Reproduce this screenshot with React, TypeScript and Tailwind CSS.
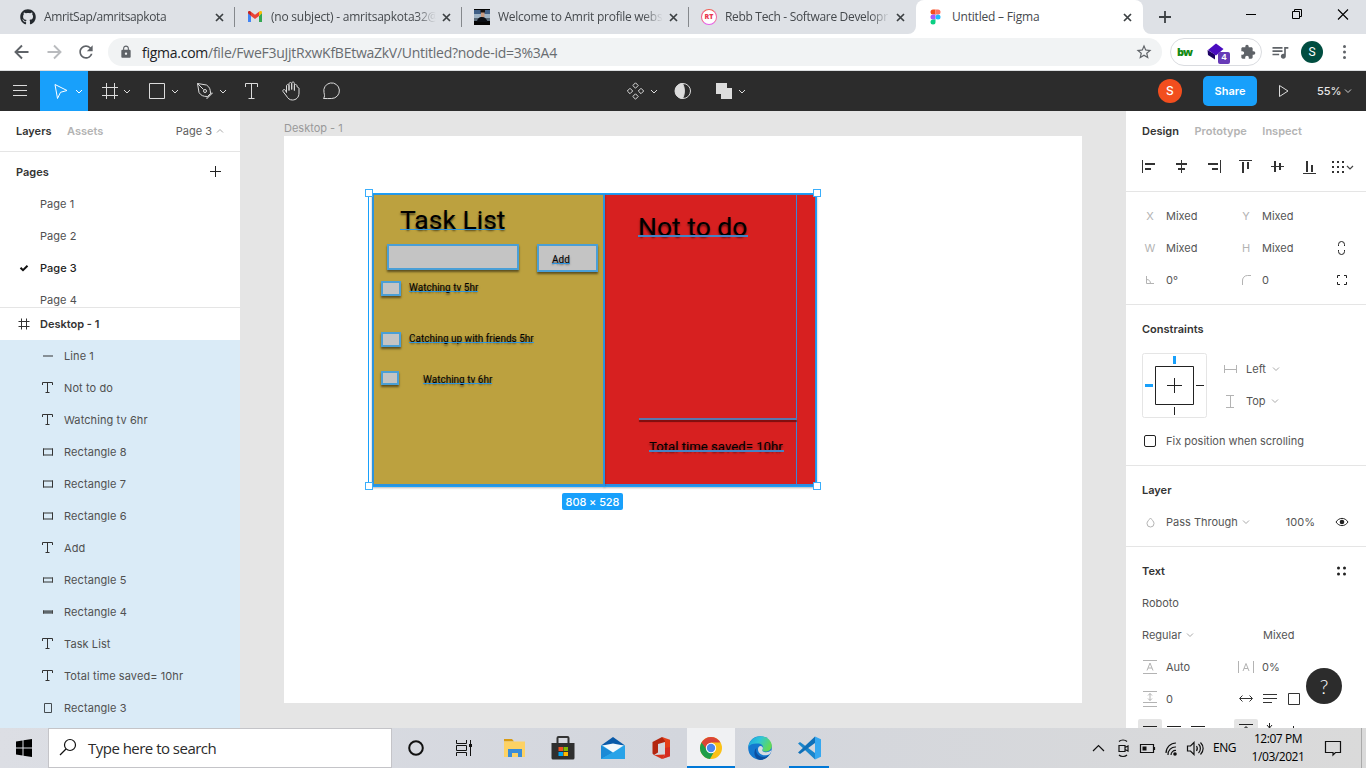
import type { ReactNode } from "react";
import { FaGithub } from "react-icons/fa";
import { MdExtension, MdLock, MdOutlineStarBorder, MdQueueMusic, MdRefresh } from "react-icons/md";

/* ---------- helpers ---------- */

function Icon({ w, h, className = "", children }: { w: number; h: number; className?: string; children: ReactNode }) {
  return (
    <svg width={w} height={h} viewBox={`0 0 ${w} ${h}`} fill="none" className={`shrink-0 ${className}`}>
      {children}
    </svg>
  );
}

function Chevron({ className = "" }: { className?: string }) {
  return (
    <Icon w={8} h={6} className={className}>
      <path d="M1 1.5 4 4.5 7 1.5" stroke="currentColor" />
    </Icon>
  );
}

/* ---------- browser chrome ---------- */

function GmailIcon() {
  return (
    <Icon w={16} h={16}>
      <path d="M1 3.5V13h3V7z" fill="#4285f4" />
      <path d="M15 3.5V13h-3V7z" fill="#34a853" />
      <path d="M1 4.2V3.4C1 2 2.500 1.600 3.600 2.400L4 2.700V7z" fill="#c5221f" />
      <path d="M15 4.2V3.4C15 2 13.500 1.600 12.400 2.400L12 2.700V7z" fill="#fbbc04" />
      <path d="M4 2.700 8 5.700 12 2.700V7L8 10 4 7z" fill="#ea4335" />
    </Icon>
  );
}

function PhotoIcon() {
  return (
    <Icon w={16} h={16}>
      <path fill="#050505" d="M0 0h16v16H0z" />
      <path fill="#3f5f86" d="M0 1h16v5H0z" />
      <path fill="#9fb4c6" d="M0 5h16v4H0z" />
      <path fill="#5a6a78" d="M0 9h16v3H0z" />
      <path fill="#0b0e14" d="M3 13c0-3 2-5 5-5s5 2 5.500 5z" />
      <path fill="#c79a80" d="M7 3h3.500v5H7z" />
      <path fill="#15110f" d="M6.500 1h4.500v2.500H6.500z" />
    </Icon>
  );
}

function RebbIcon() {
  return (
    <span className="flex size-4 items-center justify-center rounded-full border-[1.500px] border-t-[#f25c54] border-r-[#f06aa0] border-b-[#e85ce8] border-l-[#f25c8a] bg-white font-['Open_Sans',sans-serif] text-[7px] font-extrabold text-[#e8384f]">
      RT
    </span>
  );
}

function FigmaIcon() {
  return (
    <Icon w={16} h={16} className="ml-[2px]">
      <path d="M3 .5h2.500v5H3a2.500 2.500 0 0 1 0-5z" fill="#f24e1e" />
      <path d="M5.500.5H8a2.500 2.500 0 0 1 0 5H5.500z" fill="#ff7262" />
      <path d="M3 5.500h2.500v5H3a2.500 2.500 0 0 1 0-5z" fill="#a259ff" />
      <circle cx="8" cy="8" r="2.500" fill="#1abcfe" />
      <path d="M3 10.500h2.500V13A2.500 2.500 0 1 1 3 10.500z" fill="#0acf83" />
    </Icon>
  );
}

function TabClose() {
  return (
    <Icon w={9} h={9}>
      <path d="M1 1l7 7M8 1L1 8" stroke="#3c4043" strokeWidth="1.700" />
    </Icon>
  );
}

const TABS: { title: string; icon: ReactNode; track: string }[] = [
  { title: "AmritSap/amritsapkota", icon: <FaGithub className="size-4 text-[#24292e]" />, track: "tracking-[-0.37px]" },
  { title: "(no subject) - amritsapkota32@", icon: <GmailIcon />, track: "tracking-[-0.22px]" },
  { title: "Welcome to Amrit profile webs", icon: <PhotoIcon />, track: "tracking-[-0.26px]" },
  { title: "Rebb Tech - Software Developr", icon: <RebbIcon />, track: "tracking-[-0.32px]" },
];

function TabStrip() {
  return (
    <div className="flex h-[34px] shrink-0 bg-[#dee1e6] pl-2 font-['Open_Sans',sans-serif] text-[12px] text-[#45494d]">
      {TABS.map((t, i) => (
        <div key={t.title} className="flex w-[227px] shrink-0 items-center pl-3">
          <span className="flex w-6 shrink-0">{t.icon}</span>
          <span
            className={`w-[165px] whitespace-nowrap [mask-image:linear-gradient(to_right,black_88%,transparent_100%)] ${t.track}`}
          >
            {t.title}
          </span>
          <span className="ml-[6px]">
            <TabClose />
          </span>
          {i < 3 && <span className="ml-[10px] h-5 w-px bg-[#85888c]" />}
        </div>
      ))}
      <div className="relative flex w-[227px] shrink-0 items-center rounded-t-[8px] bg-white pl-3">
        <Icon w={8} h={8} className="absolute bottom-0 -left-2">
          <path d="M8 0v8H0a8 8 0 0 0 8-8z" fill="#fff" />
        </Icon>
        <Icon w={8} h={8} className="absolute -right-2 bottom-0">
          <path d="M0 0v8h8a8 8 0 0 1-8-8z" fill="#fff" />
        </Icon>
        <span className="flex w-6">
          <FigmaIcon />
        </span>
        <span className="w-[165px] tracking-[-0.2px]">Untitled – Figma</span>
        <span className="ml-[6px]">
          <TabClose />
        </span>
      </div>
      <Icon w={44} h={34}>
        <path d="M22 11v12M16 17h12" stroke="#3c4043" strokeWidth="1.800" />
      </Icon>
      <Icon w={179} h={34} className="ml-auto">
        <g stroke="#000">
          <path d="M59 14.500h10" />
          <path d="M105.500 11.500h7v7h-7zM107.500 11.500v-2h7v7h-2" />
          <path d="M151 9.500l10 10M161 9.500l-10 10" strokeWidth="1.100" />
        </g>
      </Icon>
    </div>
  );
}

function AddressBar() {
  return (
    <div className="flex h-9 shrink-0 items-center bg-white font-['Open_Sans',sans-serif]">
      <Icon w={72} h={36}>
        <path d="M28.500 18H16M22 11.500 15.500 18l6.500 6.500" stroke="#5f6368" strokeWidth="1.900" />
        <path d="M47.500 18H60M54 11.500l6.500 6.500-6.500 6.500" stroke="#b9bbbe" strokeWidth="1.900" />
      </Icon>
      <MdRefresh className="ml-[4px] size-5 text-[#5f6368]" />
      <div className="ml-3 flex h-7 w-[1054px] items-center rounded-full bg-[#f1f3f4] pr-[9px] pl-[11px]">
        <MdLock className="size-[14px] text-[#5f6368]" />
        <span className="ml-[9px] flex-1 text-[14px] tracking-[-0.26px] whitespace-nowrap text-[#686c70]">
          <span className="text-[#202124]">figma.com</span>/file/FweF3uJjtRxwKfBEtwaZkV/Untitled?node-id=3%3A4
        </span>
        <MdOutlineStarBorder className="size-[18px] text-[#5f6368]" />
      </div>
      <div className="ml-2 flex h-7 w-[92px] items-center rounded-full border border-[#dadce0] pl-[6px]">
        <span className="w-[21px] text-[11px] font-extrabold tracking-[-1px] text-[#138a13]">bw</span>
        <div className="relative">
          <Icon w={32} h={24}>
            <path d="M9.500 10 17 14.500v5L10 15z" fill="#1b0063" />
            <path d="M18 3.500l7.500 5.500-7.500 6.500-8-5.500z" fill="#4a0cc0" />
          </Icon>
          <span className="absolute top-[12px] left-[20px] flex h-3 w-3 items-center justify-center rounded-[2px] bg-[#673ab7] font-['Liberation_Sans',sans-serif] text-[9px] font-bold text-white">
            4
          </span>
        </div>
        <MdExtension className="ml-[10px] size-4 text-[#5f6368]" />
      </div>
      <MdQueueMusic className="ml-[8px] size-5 text-[#5f6368]" />
      <span className="ml-[11px] flex size-[22px] items-center justify-center rounded-full bg-[#004d40] font-[Roboto,sans-serif] text-[12px] text-white">
        S
      </span>
      <Icon w={43} h={36}>
        <g fill="#5f6368">
          <circle cx="21.500" cy="12.500" r="1.500" />
          <circle cx="21.500" cy="18" r="1.500" />
          <circle cx="21.500" cy="23.500" r="1.500" />
        </g>
      </Icon>
    </div>
  );
}

/* ---------- editor toolbar ---------- */

function Tool({ w = 48, active = false, children }: { w?: 40 | 48; active?: boolean; children: ReactNode }) {
  return (
    <div className={active ? "bg-[#18a0fb] text-white" : "text-[#dcdcdc]"}>
      <Icon w={w} h={40}>
        <g stroke="currentColor">
          {children}
          {w === 48 && <path d="M36 19l3 3 3-3" />}
        </g>
      </Icon>
    </div>
  );
}

function Toolbar() {
  return (
    <div className="flex h-10 shrink-0 items-center bg-[#2c2c2c] font-[Inter,sans-serif]">
      <Tool w={40}>
        <path d="M13 14.500h14M13 19.500h14M13 24.500h14" />
      </Tool>
      <Tool active>
        <path d="M15 13.500l12 6-6.500 1.800-3 6.200z" />
      </Tool>
      <Tool>
        <path d="M18.500 12v16M26.500 12v16M14 16.500h16M14 24.500h16" />
      </Tool>
      <Tool>
        <path d="M13.500 12.500h15v15h-15z" />
      </Tool>
      <Tool>
        <path d="M13.500 12.500l9 1.500c3 2 4 4 4 8.500l-3 3c-4.500 0-6.500-1-8.500-4zM13.500 12.500l6 6M23 26.500l5-5M22.500 28l6-6" />
        <circle cx="21" cy="20" r="1.500" />
      </Tool>
      <Tool w={40}>
        <path d="M13.500 16v-3.500h12V16M19.500 12.500v15M16.500 27.500h6" />
      </Tool>
      <Tool w={40}>
        <path d="M15.500 22v-6.500c0-2 2.500-2 2.500 0V20v-6.500c0-2 2.700-2 2.700 0V19v-6c0-2 2.700-2 2.700 0v7-4.500c0-2 2.600-2 2.600 0 0 2 1.500 1 2 2v5c0 4.500-3 7-6.500 7-3 0-4.500-1.500-6-4l-3.500-4.500c-.8-1.500 1.200-2.800 2.500-1.200z" transform="translate(-1 -.5)" />
      </Tool>
      <Tool w={40}>
        <path d="M11.500 27.500c1.500-2 1-3.500.5-6a7.800 7.800 0 1 1 7.700 6c-3 0-5 .2-8.200 0z" />
      </Tool>
      <div className="ml-[263px] flex">
        <Tool>
          <g transform="translate(20.500 20)">
            <path d="M0-8.200l2.700 2.700L0-2.800l-2.700-2.700zM0 2.800l2.700 2.700L0 8.200l-2.700-2.700zM-5.500-2.700l2.700 2.700-2.700 2.700L-8.200 0zM5.500-2.700L8.200 0 5.500 2.700 2.800 0z" />
          </g>
        </Tool>
        <Tool w={40}>
          <circle cx="20" cy="20" r="7.500" />
          <path d="M19.500 12.500a7.500 7.500 0 0 0 0 15c2.500-4 2.500-11 0-15z" fill="currentColor" />
        </Tool>
        <Tool>
          <path d="M13 12h11v5h5v11H18v-5h-5z" fill="currentColor" stroke="none" />
        </Tool>
      </div>
      <span className="ml-auto flex size-6 items-center justify-center rounded-full bg-[#f24e1e] text-[12px] font-medium text-white">
        S
      </span>
      <span className="ml-[21px] flex h-[30px] w-[54px] items-center justify-center rounded-[5px] bg-[#18a0fb] text-[11px] font-semibold tracking-[0.05px] text-white">
        Share
      </span>
      <Icon w={52} h={40}>
        <path d="M22.500 14.500v11l8.500-5.500z" stroke="#dcdcdc" />
      </Icon>
      <span className="ml-[8px] w-[27px] text-[11px] font-medium text-[#e6e6e6]">55%</span>
      <Chevron className="mr-[14px] text-[#cfcfcf]" />
    </div>
  );
}

/* ---------- left panel ---------- */

type LayerKind = "line" | "text" | "rect" | "flat" | "bar" | "tall";

function LayerIcon({ kind }: { kind: LayerKind }) {
  return (
    <Icon w={12} h={12} className="mr-[10px]">
      {kind === "line" && <path d="M1 6h10" stroke="#868f96" strokeWidth="2" />}
      {kind === "text" && <path d="M.5 3V.5h10V3M5.500.5v10M3.500 10.500h4" stroke="#333" />}
      {kind === "rect" && (
        <>
          <path d="M1 3h10M1 9h10" stroke="#869096" strokeWidth="2" />
          <path d="M1.500 2.500v7M10.500 2.500v7" stroke="#333" />
        </>
      )}
      {kind === "flat" && (
        <>
          <path d="M1 4h10M1 8h10" stroke="#869096" strokeWidth="2" />
          <path d="M1.500 3.500v5M10.500 3.500v5" stroke="#444" />
        </>
      )}
      {kind === "bar" && (
        <>
          <path d="M1 6h10" stroke="#869096" strokeWidth="4" />
          <path d="M1 6h10" stroke="#5e676c" strokeWidth="2" />
          <path d="M1.500 4.500v3M10.500 4.500v3" stroke="#444" />
        </>
      )}
      {kind === "tall" && <path d="M2.500 1.500h7v9h-7z" stroke="#444b50" />}
    </Icon>
  );
}

const LAYERS: [LayerKind, string][] = [
  ["line", "Line 1"],
  ["text", "Not to do"],
  ["text", "Watching tv 6hr"],
  ["rect", "Rectangle 8"],
  ["rect", "Rectangle 7"],
  ["rect", "Rectangle 6"],
  ["text", "Add"],
  ["flat", "Rectangle 5"],
  ["bar", "Rectangle 4"],
  ["text", "Task List"],
  ["text", "Total time saved= 10hr"],
  ["tall", "Rectangle 3"],
];

function LeftPanel() {
  return (
    <div className="flex w-60 shrink-0 flex-col overflow-hidden bg-white text-[#505050]">
      <div className="flex h-[41px] shrink-0 items-center border-b border-[#e5e5e5] px-4">
        <span className="w-[51px] font-semibold text-[#333]">Layers</span>
        <span className="font-semibold text-[#b3b3b3]">Assets</span>
        <span className="ml-auto text-[#606060]">Page 3</span>
        <Chevron className="ml-[4px] rotate-180 text-[#aaa]" />
      </div>
      <div className="flex h-9 shrink-0 items-center pt-1 pl-4">
        <span className="font-semibold text-[#333]">Pages</span>
        <Icon w={12} h={12} className="mr-[19px] ml-auto">
          <path d="M6.500 0v11M1 5.500h11" stroke="#222" />
        </Icon>
      </div>
      <div className="h-[120px] shrink-0 overflow-hidden border-b border-[#e5e5e5]">
        {[1, 2, 3, 4].map((n) => (
          <div key={n} className="flex h-8 items-center tracking-[0.05px]">
            <span className="flex w-10 pl-[19px]">
              {n === 3 && (
                <Icon w={10} h={8}>
                  <path d="M1.500 3.800 4 6.200 8.500 1.800" stroke="#111" strokeWidth="2" />
                </Icon>
              )}
            </span>
            <span className={n === 3 ? "font-medium text-[#222]" : ""}>Page {n}</span>
          </div>
        ))}
      </div>
      <div className="flex h-8 shrink-0 items-center pl-[18px] font-semibold text-[#333]">
        <Icon w={12} h={12} className="mr-[10px]">
          <path d="M3.500.5v11M8.500.5v11M.5 3.500h11M.5 8.500h11" stroke="#333" />
        </Icon>
        Desktop - 1
      </div>
      <div className="flex-1 bg-[#daebf7]">
        {LAYERS.map(([kind, name]) => (
          <div key={name} className="flex h-8 items-center pl-[42px] tracking-[0.09px]">
            <LayerIcon kind={kind} />
            {name}
          </div>
        ))}
      </div>
    </div>
  );
}

/* ---------- canvas ---------- */

const INK = "absolute whitespace-nowrap text-black leading-none [text-shadow:0_2px_2px_rgba(0,0,0,0.55)]";
const BOX = "absolute border-2 border-[#4a9fd6] bg-[#c4c4c4] shadow-[0_2px_2px_rgba(0,0,0,0.5)]";
const RULE = "absolute h-px bg-[#2f96e0]";
const RED_RULE = "absolute h-[2px] bg-[#4782c4]";
const HANDLE = "absolute size-2 border border-[#3aaefb] bg-white";

function Canvas() {
  return (
    <div className="relative flex-1 overflow-hidden bg-[#e5e5e5]">
      <span className="absolute top-[9px] left-[44px] text-[11px] text-[#999]">Desktop - 1</span>
      <div className="absolute top-[25px] left-[44px] h-[567px] w-[798px] bg-white" />

      <div className="absolute top-[82px] left-[364px] h-[293px] w-[213px] border-2 border-l-0 border-[#2d8de0] bg-[#d72020] shadow-[0_2px_2px_rgba(0,0,0,0.3)]" />
      <div className="absolute top-[82px] left-[132px] h-[293px] w-[233px] border-2 border-[#2d93dd] bg-[#bca13f] shadow-[0_2px_2px_rgba(0,0,0,0.3)]" />
      <div className="absolute top-[83px] left-[556px] h-[291px] w-px bg-[#3a86d8]" />

      <div className="font-[Roboto,sans-serif]">
        <span className={`${INK} top-[96px] left-[160px] text-[26.500px]`}>Task List</span>
        <span className={`${INK} top-[103px] left-[398px] text-[26.500px]`}>Not to do</span>
        <div className={`${BOX} top-[133px] left-[147px] h-[26px] w-[132px]`} />
        <div className={`${BOX} top-[133px] left-[297px] h-[28px] w-[61px]`} />
        <div className={`${BOX} top-[170px] left-[141px] h-[15px] w-[20px]`} />
        <div className={`${BOX} top-[221px] left-[141px] h-[15px] w-[20px]`} />
        <div className={`${BOX} top-[260px] left-[141px] h-[14px] w-[18px]`} />
        <span className={`${INK} top-[144px] left-[312px] text-[10px]`}>Add</span>
        <span className={`${INK} top-[172px] left-[169px] text-[10px]`}>Watching tv 5hr</span>
        <span className={`${INK} top-[223px] left-[169px] text-[10px]`}>Catching up with friends 5hr</span>
        <span className={`${INK} top-[264px] left-[183px] text-[10px]`}>Watching tv 6hr</span>
        <span className={`${INK} top-[329px] left-[409px] text-[13.200px]`}>Total time saved= 10hr</span>
      </div>

      <div className={`${RULE} top-[118px] left-[160px] w-[105px]`} />
      <div className={`${RED_RULE} top-[124px] left-[398px] w-[110px]`} />
      <div className={`${RULE} top-[152px] left-[312px] w-[18px]`} />
      <div className={`${RULE} top-[180px] left-[169px] w-[69px]`} />
      <div className={`${RULE} top-[231px] left-[169px] w-[125px]`} />
      <div className={`${RULE} top-[272px] left-[183px] w-[69px]`} />
      <div className={`${RED_RULE} top-[339px] left-[409px] w-[135px]`} />
      <div className="absolute top-[307px] left-[399px] h-[2px] w-[158px] bg-[#5a78ae] shadow-[0_2px_1px_rgba(60,0,0,0.6)]" />

      <div className="absolute top-[82px] left-[128px] h-[294px] w-[449px] border border-[#18a0fb]" />
      <div className={`${HANDLE} top-[78px] left-[125px]`} />
      <div className={`${HANDLE} top-[78px] left-[573px]`} />
      <div className={`${HANDLE} top-[371px] left-[125px]`} />
      <div className={`${HANDLE} top-[371px] left-[573px]`} />
      <span className="absolute top-[382px] left-[322px] flex h-[17px] w-[61px] items-center justify-center rounded-[2px] bg-[#18a0fb] text-[11px] tracking-[-0.1px] font-medium text-white">
        808 × 528
      </span>
    </div>
  );
}

/* ---------- right panel ---------- */

function Slot({ children }: { children?: ReactNode }) {
  return <span className="flex w-8 shrink-0 justify-center text-[#b3b3b3]">{children}</span>;
}

function Field({ icon, children }: { icon: ReactNode; children: ReactNode }) {
  return (
    <>
      <Slot>{icon}</Slot>
      <span className="flex w-16 items-center whitespace-nowrap">{children}</span>
    </>
  );
}

function Row({ children }: { children: ReactNode }) {
  return <div className="flex h-8 items-center pl-2">{children}</div>;
}

function Title({ children }: { children: ReactNode }) {
  return <div className="flex h-8 items-center justify-between pl-4 font-semibold text-[#333]">{children}</div>;
}

const ALIGN: { guide: string; bars: string }[] = [
  { guide: "M1.500 2v13", bars: "M4 6h10M4 11h6" },
  { guide: "M8.500 2v13", bars: "M3 6h11M5 11h7" },
  { guide: "M15.500 2v13", bars: "M3 6h10M7 11h6" },
  { guide: "M2 2.500h13", bars: "M6 4v11M11 4v7" },
  { guide: "M2 8.500h13", bars: "M6 3v11M11 5v7" },
  { guide: "M2 15.500h13", bars: "M6 3v11M11 7v7" },
];

function RightPanel() {
  return (
    <div className="w-60 shrink-0 overflow-hidden bg-white text-[#555]">
      <div className="flex h-10 items-center gap-[15.500px] pl-4 font-semibold text-[#b3b3b3]">
        <span className="text-[#333]">Design</span>
        <span>Prototype</span>
        <span>Inspect</span>
      </div>
      <div className="flex h-[41px] items-center border-b border-[#e5e5e5] pb-[9px] pl-[7px]">
        {ALIGN.map((a) => (
          <Slot key={a.guide}>
            <Icon w={17} h={17} className="ml-px">
              <path d={a.guide} stroke="#333" />
              <path d={a.bars} stroke="#333" strokeWidth="2" />
            </Icon>
          </Slot>
        ))}
        <Icon w={28} h={16} className="ml-[5px]">
          {[2, 7, 12].flatMap((y) => [2, 7, 12].map((x) => <path key={`${x}-${y}`} d={`M${x} ${y}h2v2h-2z`} fill="#333" />))}
          <path d="M17 7l3 3 3-3" stroke="#444" strokeWidth="1.200" />
        </Icon>
      </div>
      <div className="border-b border-[#e5e5e5] py-2">
        <Row>
          <Field icon="X">Mixed</Field>
          <Field icon="Y">Mixed</Field>
        </Row>
        <Row>
          <Field icon="W">Mixed</Field>
          <Field icon="H">Mixed</Field>
          <Slot>
            <Icon w={8} h={14}>
              <path d="M.5 5V3.500a3 3 0 0 1 6 0V5M.5 9v1.500a3 3 0 0 0 6 0V9" stroke="#222" />
            </Icon>
          </Slot>
        </Row>
        <Row>
          <Field
            icon={
              <Icon w={9} h={9}>
                <path d="M.5 0v7.500H8M.5 3.500c2.500 0 4 1.500 4 4" stroke="currentColor" />
              </Icon>
            }
          >
            0°
          </Field>
          <Field
            icon={
              <Icon w={10} h={10}>
                <path d="M1.500 10V6a5 5 0 0 1 5-5.500H10" stroke="currentColor" />
              </Icon>
            }
          >
            0
          </Field>
          <Slot>
            <Icon w={10} h={10}>
              <path d="M.5 3V.5H3M7 .5h2.500V3M9.500 7v2.500H7M3 9.500H.5V7" stroke="#222" />
            </Icon>
          </Slot>
        </Row>
      </div>
      <div className="h-[161px] border-b border-[#e5e5e5] pt-2">
        <Title>Constraints</Title>
        <div className="mt-2 flex pl-4">
          <Icon w={65} h={65}>
            <rect x=".5" y=".5" width="64" height="64" rx="2" stroke="#e5e5e5" />
            <path d="M13.500 13.500h38v38h-38zM25 32.500h15M32.500 25v15M54 32.500h8M32.500 54v8" stroke="#222" />
            <path d="M32.500 3v8M3 32.500h8" stroke="#18a0fb" strokeWidth="3" />
          </Icon>
          <div className="ml-[7px]">
            <div className="flex h-8 items-center">
              <Slot>
                <Icon w={13} h={8}>
                  <path d="M.5 0v8M12.500 0v8M1 4.500h11" stroke="currentColor" />
                </Icon>
              </Slot>
              Left
              <Chevron className="ml-[6px] text-[#aaa]" />
            </div>
            <div className="flex h-8 items-center">
              <Slot>
                <Icon w={8} h={13}>
                  <path d="M0 .5h8M0 12.500h8M4.500 1v11" stroke="currentColor" />
                </Icon>
              </Slot>
              Top
              <Chevron className="ml-[5px] text-[#aaa]" />
            </div>
          </div>
        </div>
        <div className="mt-[7px] flex h-8 items-center pl-[18px]">
          <span className="mr-[10px] size-3 rounded-[2px] border border-[#222]" />
          Fix position when scrolling
        </div>
      </div>
      <div className="border-b border-[#e5e5e5] py-2">
        <Title>Layer</Title>
        <Row>
          <Slot>
            <Icon w={9} h={11}>
              <path d="M4.500 1C3 3 1 4.500 1 6.500a3.500 3.500 0 0 0 7 0C8 4.500 6 3 4.500 1z" stroke="currentColor" />
            </Icon>
          </Slot>
          Pass Through
          <Chevron className="ml-[4px] text-[#aaa]" />
          <span className="ml-auto">100%</span>
          <Icon w={14} h={10} className="mr-[17px] ml-[20px]">
            <path d="M1 5c3-4.800 9-4.800 12 0-3 4.800-9 4.800-12 0z" stroke="#222" />
            <circle cx="7" cy="5" r="2.300" fill="#222" />
          </Icon>
        </Row>
      </div>
      <div className="pt-2">
        <Title>
          Text
          <Icon w={10} h={10} className="mr-[19px]">
            <g fill="#222">
              <circle cx="1.500" cy="2" r="1.500" />
              <circle cx="7.500" cy="2" r="1.500" />
              <circle cx="1.500" cy="8" r="1.500" />
              <circle cx="7.500" cy="8" r="1.500" />
            </g>
          </Icon>
        </Title>
        <div className="flex h-8 items-center pl-4">Roboto</div>
        <div className="flex h-8 items-center pl-4">
          <span className="flex w-[121px] items-center">
            Regular
            <Chevron className="ml-[4px] text-[#aaa]" />
          </span>
          Mixed
        </div>
        <Row>
          <Field
            icon={
              <Icon w={14} h={14}>
                <path d="M0 .5h14M0 13.500h14M4 10.500l3-7.500 3 7.500M5 8h4" stroke="currentColor" />
              </Icon>
            }
          >
            Auto
          </Field>
          <Field
            icon={
              <Icon w={16} h={12}>
                <path d="M.5 0v12M15.500 0v12M5 10l3-7.500 3 7.500M6 7.500h4" stroke="currentColor" />
              </Icon>
            }
          >
            0%
          </Field>
        </Row>
        <Row>
          <Field
            icon={
              <Icon w={14} h={16}>
                <path d="M0 .5h14M0 11.500h14M0 15.500h14M7 2.500v7M5 4.500l2-2 2 2M5 7.500l2 2 2-2" stroke="currentColor" />
              </Icon>
            }
          >
            0
          </Field>
          <Icon w={96} h={16}>
            <g stroke="#333">
              <path d="M10 7.500h12M12.500 4.500l-3 3 3 3M19.500 4.500l3 3-3 3" />
              <path d="M33 3.500h14M33 7.500h14M33 11.500h9" />
              <path d="M58.500 2.500h11v11h-11z" />
            </g>
          </Icon>
        </Row>
        <Icon w={240} h={32}>
          <path d="M12 2a2 2 0 0 1 2-2h20a2 2 0 0 1 2 2v30H12zM108 2a2 2 0 0 1 2-2h20a2 2 0 0 1 2 2v30h-24z" fill="#e5e5e5" transform="translate(0 4)" />
          <path d="M17 11.500h14M41 11.500h14M65 11.500h14M113 9.500h14M120 14v-2M117.500 14l2.500-2.500 2.500 2.500M143.500 8v5M141 10l2.500 3 2.500-3M167.500 11v4" stroke="#222" />
        </Icon>
      </div>
    </div>
  );
}

/* ---------- taskbar ---------- */

function AppSlot({ children, state = "idle" }: { children: ReactNode; state?: "idle" | "open" | "active" }) {
  return (
    <div
      className={`flex h-10 w-12 shrink-0 items-center justify-center ${
        state === "active" ? "border-b-2 border-[#0078d7] bg-[#f0f1f3] pt-[2px]" : ""
      }`}
    >
      <div
        className={
          state === "open" ? "flex h-10 w-10 items-center justify-center border-b-2 border-[#0078d7] pt-[2px]" : "flex"
        }
      >
        {children}
      </div>
    </div>
  );
}

function Taskbar() {
  return (
    <div className="flex h-10 shrink-0 items-center bg-linear-to-r from-[#dcdee4] via-[#d3d6dd] to-[#dadada] font-['Open_Sans',sans-serif] text-black">
      <Icon w={48} h={40}>
        <path d="M16 13.500l6.500-1V19.500H16zM23.500 12.300l8.500-1.300v8.500h-8.500zM16 20.500h6.500v7l-6.500-1zM23.500 20.500H32V29l-8.500-1.300z" fill="#000" />
      </Icon>
      <div className="flex h-10 w-[344px] items-center border border-[#c4c4c8] bg-white">
        <Icon w={39} h={38}>
          <circle cx="21" cy="16" r="5.500" stroke="#111" strokeWidth="1.200" />
          <path d="M17 20l-6 6" stroke="#111" strokeWidth="1.200" />
        </Icon>
        <span className="text-[15px] tracking-[-0.52px] whitespace-nowrap text-[#2b2b2b]">Type here to search</span>
      </div>
      <AppSlot>
        <Icon w={18} h={18}>
          <circle cx="9" cy="9" r="6.800" stroke="#111" strokeWidth="2" />
        </Icon>
      </AppSlot>
      <AppSlot>
        <Icon w={18} h={18}>
          <path d="M1.500 1v3.500h10V1M1.500 17v-3.500h10V17M1.500 6.500h10v5h-10zM15.500 1v16" stroke="#111" />
          <path d="M14 5h3v3h-3z" fill="#111" />
        </Icon>
      </AppSlot>
      <div className="w-px" />
      <AppSlot>
        <Icon w={24} h={22} className="ml-[4px]">
          <path d="M1 2h8l2 2.500H1z" fill="#d99b12" />
          <path d="M1 4.500h21V20H1z" fill="#fdd264" />
          <path d="M5 12h14v8h-4v-4H9v4H5z" fill="#3a8dd8" />
        </Icon>
      </AppSlot>
      <AppSlot>
        <Icon w={24} h={26} className="ml-[4px]">
          <path d="M6.500 9V3a1 1 0 0 1 1-1h9a1 1 0 0 1 1 1v6" stroke="#333" strokeWidth="2" />
          <path d="M.5 8h23v15a1.500 1.500 0 0 1-1.500 1.500H2A1.500 1.500 0 0 1 .5 23z" fill="#2f2f2f" />
          <path d="M7.500 12H12v4H7.500z" fill="#f25022" />
          <path d="M12.500 12H17v4h-4.500z" fill="#7fba00" />
          <path d="M7.500 17H12v4H7.500z" fill="#00a4ef" />
          <path d="M12.500 17H17v4h-4.500z" fill="#ffb900" />
        </Icon>
      </AppSlot>
      <AppSlot>
        <Icon w={24} h={24} className="ml-[7px]">
          <path d="M0 9.500 12 1l12 8.500z" fill="#0a5aa8" />
          <path d="M0 9.500h24V23H0z" fill="#38b2f0" />
          <path d="M0 9.500 12 16.500 0 23z" fill="#1b8ad6" />
          <path d="M0 23l24-13.500V23z" fill="#29a3e8" />
          <path d="M1.500 9.500 12 7.500l10.500 2L12 16.500z" fill="#f4f8fb" />
        </Icon>
      </AppSlot>
      <AppSlot>
        <Icon w={20} h={24} className="ml-[8px]">
          <path d="M1.500 6 11 1l3 2v3L7 8v8.500L3 19l-1.500-1.500z" fill="#b3260f" />
          <path d="M11 1l8 2.800v16.400L11 23l3-4V5z" fill="#e5401a" />
          <path d="M3 19l11-.5V19l-3 4z" fill="#d8321a" />
          <path d="M14 12l5-1v9.200L11 23l3-4z" fill="#c91f24" opacity=".6" />
        </Icon>
      </AppSlot>
      <div className="w-[6px]" />
      <AppSlot state="active">
        <Icon w={24} h={24}>
          <circle cx="12" cy="12" r="11" fill="#fbc116" />
          <path d="M12 12 2.500 6.500A11 11 0 0 0 11 23l5-9z" fill="#1e9e4a" />
          <path d="M2.500 6.500a11 11 0 0 1 19 0H12L8 14z" fill="#db4437" />
          <circle cx="12" cy="12" r="5.200" fill="#fff" />
          <circle cx="12" cy="12" r="4.200" fill="#4a87ee" />
        </Icon>
      </AppSlot>
      <AppSlot>
        <Icon w={24} h={24} className="ml-[1px]">
          <defs>
            <linearGradient id="edgeTop" x1="0" y1="0" x2="1" y2=".4">
              <stop offset="0" stopColor="#1a9fe0" />
              <stop offset=".5" stopColor="#2fc6d6" />
              <stop offset="1" stopColor="#62d957" />
            </linearGradient>
          </defs>
          <circle cx="12" cy="12" r="11.800" fill="#1478cf" />
          <path d="M.3 11C1.500 4 6.500.2 12.500.2 19 .2 24 5 23.800 10c-.1 4-4 6-7.500 5.500-2-.3-2.500-1-1.500-2.500 1-2 0-5-4-5.500C6 7 2 8 .3 11z" fill="url(#edgeTop)" />
          <path d="M8.500 12c-1.500 5 2 9 7 9 3 0 5-1.500 6.500-3.500C20 21.500 16.500 24 12 24c-4-1-6-5-5.500-8 .2-2 1-3.200 2-4z" fill="#0d4fa0" />
          <path d="M10 13.500c0-2.200 1-3.500 2.700-3.500 1.600 0 2.600 1.600 2 3-.9 1.500-.4 2.500 1.600 3 2.500.5 5 0 7.200-2-.3 2-1 3.200-2 4.200-1.500.8-3 1-4.500 1-4 0-7-2.500-7-5.700z" fill="#d7dbe2" />
        </Icon>
      </AppSlot>
      <div className="w-[2px]" />
      <AppSlot state="open">
        <Icon w={26} h={26}>
          <path d="M2 8.500 4 7l15 11v6.500z" fill="#1a86cc" />
          <path d="M2 17.500 4 19 19 8V1.500z" fill="#0f70b8" />
          <path d="M19 1.500l6 2.700v17.600l-6 2.700z" fill="#36a8f0" />
        </Icon>
      </AppSlot>
      <Icon w={124} h={40} className="ml-auto">
        <g stroke="#111" strokeWidth="1.200">
          <path d="M4 23l5.500-5.500L15 23" />
          <path d="M30 17.500h6v6h-6zM36 19.500l3-1.500v5l-3-1.500M30 13.500c2-2 6-2 8 0M30 27c2 2 6 2 8 0" />
          <path d="M51.500 16.500h13v8h-13zM65.500 19v3" />
          <path d="M77 25a10 10 0 0 1 10-10M79 27a7.500 7.500 0 0 1 8-8M82 27a4.500 4.500 0 0 1 5-4.500" />
          <path d="M98.500 18h3l3.500-3.500v12L101.500 23h-3zM107.500 18c1 1.500 1 3.500 0 5M109.500 16c2.500 2.500 2.500 6.500 0 9M111.500 14.500c3.500 3.500 3.500 8.500 0 12" />
        </g>
        <path d="M53.500 18.500h4v4h-4z" fill="#111" />
        <circle cx="86" cy="26" r="1.800" fill="#111" />
      </Icon>
      <span className="w-[24px] text-[12px] tracking-[-0.45px]">ENG</span>
      <div className="flex w-[82px] flex-col items-center text-[12px] leading-[18px] tracking-[-0.45px]">
        <span>12:07 PM</span>
        <span>1/03/2021</span>
      </div>
      <Icon w={42} h={40}>
        <path d="M6.500 13.500h15v11h-5l-2.500 2.500v-2.500H6.500z" stroke="#111" strokeWidth="1.200" />
      </Icon>
      <span className="mr-1 h-10 w-px bg-[#aaa]" />
    </div>
  );
}

export default function App() {
  return (
    <div className="relative flex h-[768px] w-[1366px] flex-col overflow-hidden">
      <TabStrip />
      <AddressBar />
      <div className="h-px shrink-0 bg-[#dcdee0]" />
      <Toolbar />
      <div className="relative flex min-h-0 flex-1 font-[Inter,sans-serif] text-[11px] leading-4">
        <LeftPanel />
        <Canvas />
        <RightPanel />
        <span className="absolute right-6 bottom-6 flex size-9 items-center justify-center rounded-full bg-[#2c2c2c] font-[Lato,sans-serif] text-[20px] font-light text-white">
          ?
        </span>
      </div>
      <Taskbar />
    </div>
  );
}
